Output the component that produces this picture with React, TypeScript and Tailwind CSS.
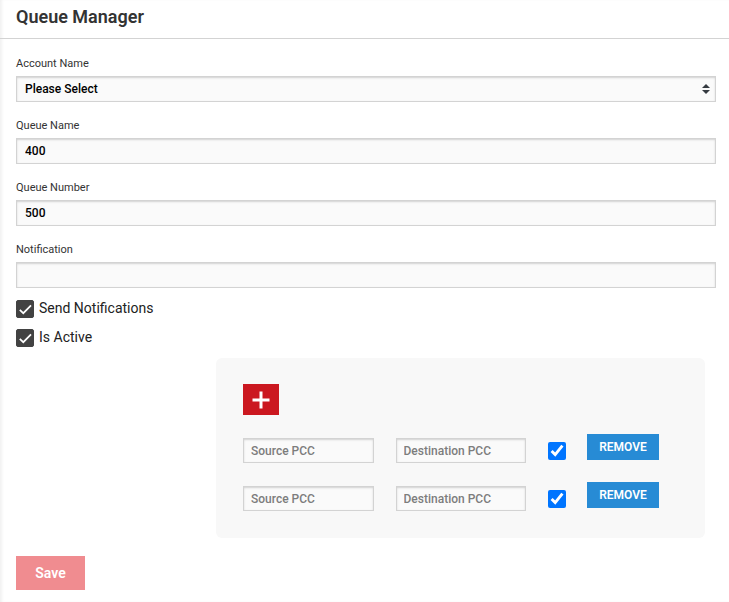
import { useState } from 'react';
import type { ReactNode } from 'react';

const inputStyles =
  'block border border-[#d3d3d3] bg-[#fafafa] text-xs font-medium text-black outline-none shadow-[inset_0_1px_2px_rgba(0,0,0,0.16)]';

const Field = ({ id, label, children }: { id: string; label: string; children: ReactNode }) => {
  return (
    <div className="mb-4">
      <label htmlFor={id} className="mb-1 block text-[11px] leading-4 text-[#333333]">
        {label}
      </label>
      {children}
    </div>
  );
};

const CheckOption = ({ label }: { label: string }) => {
  return (
    <label className="flex w-fit items-start gap-[5px] text-sm leading-4 text-[#222222]">
      <span className="relative h-[18px] w-[18px]">
        <input
          type="checkbox"
          defaultChecked
          className="peer block h-[18px] w-[18px] appearance-none rounded-xs border border-[#424242] checked:bg-[#424242]"
        />
        <svg
          viewBox="0 0 18 18"
          className="pointer-events-none absolute inset-0 hidden h-[18px] w-[18px] peer-checked:block"
          fill="none"
          stroke="#ffffff"
          strokeWidth="1.7"
        >
          <path d="M3.8 9.8 L7.3 13.2 L15 5.4" />
        </svg>
      </span>
      {label}
    </label>
  );
};

const App = () => {
  const [rows, setRows] = useState([1, 2]);

  return (
    <div className="min-h-screen bg-white font-['Roboto',sans-serif] shadow-[inset_3px_0_3px_-1px_rgba(0,0,0,0.06)]">
      <header className="border-b border-[#d3d3d3] px-4 pt-[5px] pb-[9px]">
        <h1 className="text-lg leading-6 font-semibold text-[#333333]">Queue Manager</h1>
      </header>

      <form className="pt-[17px] pr-[13px] pb-3 pl-4" onSubmit={(e) => e.preventDefault()}>
        <Field id="account" label="Account Name">
          <div className="relative">
            <select id="account" className={`${inputStyles} h-[26px] w-full appearance-none px-2`}>
              <option>Please Select</option>
            </select>
            <svg
              viewBox="0 0 8 10"
              className="pointer-events-none absolute top-2 right-[6px] h-[10px] w-2"
              fill="#343a40"
            >
              <path d="M4 0 L8 4 H0 Z M0 6 H8 L4 10 Z" />
            </svg>
          </div>
        </Field>
        <Field id="queue-name" label="Queue Name">
          <input id="queue-name" type="text" defaultValue="400" className={`${inputStyles} h-[26px] w-full px-2`} />
        </Field>
        <Field id="queue-number" label="Queue Number">
          <input id="queue-number" type="text" defaultValue="500" className={`${inputStyles} h-[26px] w-full px-2`} />
        </Field>
        <Field id="notification" label="Notification">
          <input id="notification" type="text" className={`${inputStyles} h-[26px] w-full px-2`} />
        </Field>

        <div className="-mt-1 flex flex-col gap-[11px]">
          <CheckOption label="Send Notifications" />
          <CheckOption label="Is Active" />
        </div>

        <div className="mt-[11px] mr-[11px] ml-[200px] rounded-md bg-[#f8f8f8] pt-[26px] pr-[46px] pb-[27px] pl-[27px]">
          <button
            type="button"
            aria-label="Add row"
            onClick={() => setRows([...rows, Math.max(0, ...rows) + 1])}
            className="flex h-[31px] w-9 items-center justify-center bg-[#cb1820]"
          >
            <svg viewBox="0 0 18 18" className="h-[18px] w-[18px]" fill="none" stroke="#ffffff" strokeWidth="3">
              <path d="M9 0.5 V17.5 M0.5 9 H17.5" />
            </svg>
          </button>

          <div className="mt-[19px] flex flex-col gap-[19px]">
            {rows.map((row) => (
              <div key={row} className="flex items-end">
                <input
                  type="text"
                  aria-label="Source PCC"
                  placeholder="Source PCC"
                  className={`${inputStyles} mr-[22px] h-[25px] min-w-0 flex-1 px-[7px] placeholder:text-[#7d7d7d]`}
                />
                <input
                  type="text"
                  aria-label="Destination PCC"
                  placeholder="Destination PCC"
                  className={`${inputStyles} mr-[22px] h-[25px] min-w-0 flex-1 px-[7px] placeholder:text-[#7d7d7d]`}
                />
                <input
                  type="checkbox"
                  aria-label="Enabled"
                  defaultChecked
                  className="mr-[21px] mb-[3px] h-[18px] w-[18px] accent-[#0075ff]"
                />
                <button
                  type="button"
                  onClick={() => setRows(rows.filter((r) => r !== row))}
                  className="mb-[3px] h-[26px] w-[72px] bg-[#278bd5] text-xs font-semibold text-white"
                >
                  REMOVE
                </button>
              </div>
            ))}
          </div>
        </div>

        <button type="submit" className="mt-[18px] h-[34px] w-[69px] bg-[#f08c90] text-sm font-semibold text-white">
          Save
        </button>
      </form>
    </div>
  );
};

export default App;
